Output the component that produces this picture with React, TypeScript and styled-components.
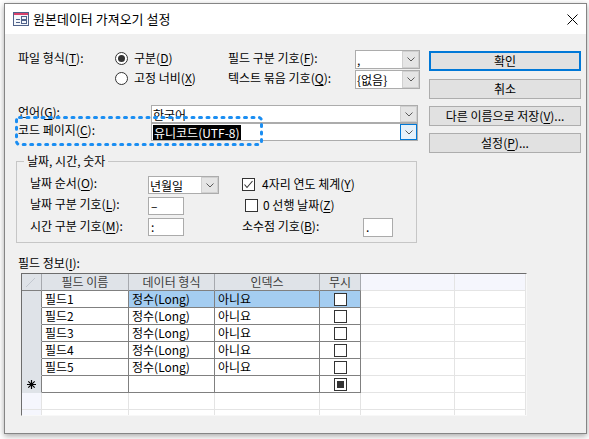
import React from "react";
import styled, { createGlobalStyle } from "styled-components";

const FONT = `"Noto Sans CJK KR", "Noto Sans", "Liberation Sans", sans-serif`;

const GlobalStyle = createGlobalStyle`
  html, body {
    margin: 0;
    padding: 0;
    background: #ffffff;
  }
  body {
    font-family: ${FONT};
    font-size: 12px;
    color: #000;
  }
`;

const Desktop = styled.div`
  width: 589px;
  height: 439px;
  padding: 3px 0 0 4px;
  box-sizing: border-box;
  overflow: hidden;
`;

const Window = styled.div`
  width: 583px;
  height: 431px;
  box-sizing: border-box;
  border: 1px solid #858585;
  background: #f0f0f0;
  box-shadow: 0 2px 6px rgba(0, 0, 0, 0.35);
  display: flex;
  flex-direction: column;
`;

const TitleBar = styled.div`
  height: 30px;
  flex: none;
  background: #fff;
  display: flex;
  align-items: center;
  padding-left: 8px;
`;

const TitleText = styled.span`
  margin-left: 4px;
  font-size: 13px;
  line-height: 18px;
`;

const CloseBox = styled.div`
  margin-left: auto;
  width: 28px;
  height: 30px;
  display: flex;
  align-items: center;
  justify-content: center;
`;

const Body = styled.div`
  flex: 1;
  padding-top: 16px;
`;

const TopSection = styled.div`
  display: flex;
  align-items: flex-start;
  margin-left: 13px;
  height: 103px;
`;

const Settings = styled.div`
  width: 402px;
`;

const FormatGrid = styled.div`
  display: grid;
  grid-template-columns: 97px 113px 127px 65px;
  grid-auto-rows: 20px;
`;

const EncodingGrid = styled.div`
  position: relative;
  margin-top: 15px;
  display: grid;
  grid-template-columns: 133px 267px;
  grid-auto-rows: 18px;
`;

const Label = styled.span<{ $shift?: number }>`
  align-self: start;
  margin-top: ${(p) => p.$shift ?? 0}px;
  line-height: 16px;
  white-space: nowrap;
`;

const Key = styled.u`
  text-underline-offset: 2px;
`;

const Option = styled.div`
  display: flex;
  align-items: center;
  height: 16px;
  align-self: start;
  white-space: nowrap;
  line-height: 16px;
`;

const RadioDot = styled.span<{ $on?: boolean }>`
  width: 13px;
  height: 13px;
  box-sizing: border-box;
  border-radius: 50%;
  border: 1px solid #333;
  background: #fff;
  margin-right: 6px;
  display: inline-flex;
  align-items: center;
  justify-content: center;

  &::after {
    content: "";
    width: 7px;
    height: 7px;
    border-radius: 50%;
    background: #333;
    display: ${(p) => (p.$on ? "block" : "none")};
  }
`;

const CheckOption = styled(Option)<{ $indent?: number }>`
  margin-left: ${(p) => p.$indent ?? 0}px;
`;

const CheckBox = styled.span<{ $gap?: number }>`
  width: 13px;
  height: 13px;
  box-sizing: border-box;
  border: 1px solid #333;
  background: #fff;
  margin-right: ${(p) => p.$gap ?? 7}px;
  display: inline-flex;
  align-items: center;
  justify-content: center;
`;

const Mark = styled.span`
  width: 7px;
  height: 7px;
  background: #333;
`;

const ComboFrame = styled.div<{ $w: number; $h: number }>`
  width: ${(p) => p.$w}px;
  height: ${(p) => p.$h}px;
  box-sizing: border-box;
  border: 1px solid #acacac;
  background: #fff;
  display: flex;
  align-self: start;
`;

const ComboValue = styled.div`
  flex: 1;
  display: flex;
  align-items: center;
  padding-left: 1px;
  line-height: 15px;
  white-space: nowrap;
  overflow: hidden;
`;

const Highlight = styled.span`
  background: #000;
  color: #fff;
  padding: 0 1px;
`;

const DropButton = styled.div<{ $focused?: boolean }>`
  width: 17px;
  box-sizing: border-box;
  background: ${(p) => (p.$focused ? "#e5f1fb" : "#e5e5e5")};
  border: 1px solid ${(p) => (p.$focused ? "#0078d7" : "#d0d0d0")};
  display: flex;
  align-items: center;
  justify-content: center;
`;

const TextBox = styled.div<{ $w: number; $h: number }>`
  width: ${(p) => p.$w}px;
  height: ${(p) => p.$h}px;
  box-sizing: border-box;
  border: 1px solid #ababab;
  background: #fff;
  padding-left: 2px;
  line-height: 15px;
  align-self: start;
`;

const Annotation = styled.svg`
  position: absolute;
  left: -4px;
  top: 10px;
  pointer-events: none;
`;

const ButtonColumn = styled.div`
  width: 152px;
  margin-left: 9px;
  padding-top: 1px;
  display: flex;
  flex-direction: column;
  gap: 7px;
`;

const PushButton = styled.button<{ $default?: boolean }>`
  height: 20px;
  box-sizing: border-box;
  padding: 0;
  margin: 0 0 ${(p) => (p.$default ? 1 : 0)}px;
  border: ${(p) => (p.$default ? "2px solid #0078d7" : "1px solid #adadad")};
  background: #e1e1e1;
  font-family: ${FONT};
  font-size: 12px;
  line-height: 16px;
  color: #000;
`;

const GroupBox = styled.fieldset`
  margin: 0 0 0 11px;
  width: 401px;
  box-sizing: border-box;
  border: 1px solid #c6c6c6;
  padding: 7px 0 6px 13px;
`;

const GroupTitle = styled.legend`
  padding: 0 3px;
  margin-left: -6px;
  line-height: 16px;
  font-size: 12px;
`;

const DateGrid = styled.div`
  display: grid;
  grid-template-columns: 118px 94px auto;
  grid-template-rows: repeat(3, 18px);
  row-gap: 3px;
`;

const DecimalField = styled.div`
  display: flex;
  align-items: flex-start;
`;

const DecimalLabel = styled(Label)`
  width: 121px;
`;

const FieldInfo = styled.div`
  margin: 12px 0 0 13px;
  line-height: 16px;
`;

const GridFrame = styled.div`
  margin: 2px 0 0 16px;
  width: 506px;
  height: 143px;
  box-sizing: border-box;
  border-top: 1px solid #6d6d6d;
  border-left: 1px solid #6d6d6d;
  border-right: 1px solid #f8f8f8;
  border-bottom: 1px solid #f8f8f8;
  background: #fff;
  overflow: hidden;
  display: grid;
  grid-template-columns: 20px 87px 86px 105px 41px 94px 71px;
  grid-auto-rows: 17px;
  align-content: start;
`;

const HeadCell = styled.div<{ $faint?: boolean }>`
  box-sizing: border-box;
  border-right: 1px solid ${(p) => (p.$faint ? "#e4e4e4" : "#a6a9ae")};
  border-bottom: 1px solid ${(p) => (p.$faint ? "#e4e4e4" : "#808080")};
  background: ${(p) => (p.$faint ? "#f5f6fd" : "#dfe3e8")};
  color: #3c3c3c;
  text-align: center;
  line-height: 16px;
  white-space: nowrap;
  overflow: hidden;
  display: flex;
  align-items: center;
  justify-content: center;
`;

const RowHeader = styled.div<{ $faint?: boolean }>`
  box-sizing: border-box;
  border-right: 1px solid ${(p) => (p.$faint ? "#e4e4e4" : "#808080")};
  border-bottom: 1px solid ${(p) => (p.$faint ? "#e4e4e4" : "#dfe3e8")};
  background: ${(p) => (p.$faint ? "#f5f6fd" : "#dfe3e8")};
  display: flex;
  align-items: center;
  justify-content: center;
`;

const DataCell = styled.div<{ $selected?: boolean; $faint?: boolean; $center?: boolean }>`
  box-sizing: border-box;
  border-right: 1px solid ${(p) => (p.$faint ? "#e4e4e4" : "#808080")};
  border-bottom: 1px solid ${(p) => (p.$faint ? "#e4e4e4" : "#808080")};
  background: ${(p) => (p.$selected ? "#a4cdf1" : "#fff")};
  padding-left: ${(p) => (p.$center ? 0 : 3)}px;
  line-height: 16px;
  white-space: nowrap;
  overflow: hidden;
  display: flex;
  align-items: center;
  justify-content: ${(p) => (p.$center ? "center" : "flex-start")};
`;

const Chevron = () => (
  <svg width="8" height="5" viewBox="0 0 8 5">
    <polyline points="0.5,0.5 4,4 7.5,0.5" fill="none" stroke="#5a5a5a" strokeWidth="1" />
  </svg>
);

const CheckMark = () => (
  <svg width="11" height="11" viewBox="0 0 11 11">
    <polyline points="1.5,5.5 4,8.5 9.5,2" fill="none" stroke="#333" strokeWidth="1.1" />
  </svg>
);

function Combo({
  width,
  height,
  value,
  focused,
  selected,
}: {
  width: number;
  height: number;
  value: string;
  focused?: boolean;
  selected?: boolean;
}) {
  return (
    <ComboFrame $w={width} $h={height}>
      <ComboValue>{selected ? <Highlight>{value}</Highlight> : value}</ComboValue>
      <DropButton $focused={focused}>
        <Chevron />
      </DropButton>
    </ComboFrame>
  );
}

const AppIcon = () => (
  <svg width="16" height="16" viewBox="0 0 16 16">
    <rect x="0.5" y="1.5" width="15" height="13" fill="#f4f7fb" stroke="#50628a" />
    <rect x="1" y="2" width="14" height="2" fill="#d8416a" />
    <path d="M3 8.5h4M3 11.5h4" stroke="#50628a" />
    <rect x="8.5" y="5.5" width="5" height="3" fill="none" stroke="#50628a" />
    <rect x="8.5" y="9.5" width="5" height="3" fill="none" stroke="#50628a" />
  </svg>
);

const NewRowStar = () => (
  <svg width="9" height="9" viewBox="0 0 9 9">
    <path
      d="M4.5 0v9M0 4.5h9M1.3 1.3l6.4 6.4M7.7 1.3l-6.4 6.4"
      stroke="#000"
      strokeWidth="1.2"
    />
  </svg>
);

const fields = ["필드1", "필드2", "필드3", "필드4", "필드5"];

export default function App() {
  return (
    <Desktop>
      <GlobalStyle />
      <Window>
        <TitleBar>
          <AppIcon />
          <TitleText>원본데이터 가져오기 설정</TitleText>
          <CloseBox>
            <svg width="11" height="11" viewBox="0 0 11 11">
              <path d="M0.5 0.5l10 10M10.5 0.5l-10 10" stroke="#000" strokeWidth="1" />
            </svg>
          </CloseBox>
        </TitleBar>
        <Body>
          <TopSection>
            <Settings>
              <FormatGrid>
                <Label>
                  파일 형식(<Key>T</Key>):
                </Label>
                <Option>
                  <RadioDot $on />
                  구분(<Key>D</Key>)
                </Option>
                <Label>
                  필드 구분 기호(<Key>F</Key>):
                </Label>
                <Combo width={65} height={19} value="," />
                <span />
                <Option>
                  <RadioDot />
                  고정 너비(<Key>X</Key>)
                </Option>
                <Label>
                  텍스트 묶음 기호(<Key>Q</Key>):
                </Label>
                <Combo width={65} height={19} value="{없음}" />
              </FormatGrid>
              <EncodingGrid>
                <Label $shift={-1}>
                  언어(<Key>G</Key>):
                </Label>
                <Combo width={267} height={18} value="한국어" />
                <Label $shift={-1}>
                  코드 페이지(<Key>C</Key>):
                </Label>
                <Combo width={267} height={18} value="유니코드(UTF-8)" focused selected />
                <Annotation width="250" height="32" viewBox="0 0 250 32">
                  <rect
                    x="2.5"
                    y="2.5"
                    width="245"
                    height="27"
                    rx="3"
                    fill="none"
                    stroke="#1b8ef2"
                    strokeWidth="3"
                    strokeDasharray="2 5.5"
                    strokeLinecap="round"
                  />
                </Annotation>
              </EncodingGrid>
            </Settings>
            <ButtonColumn>
              <PushButton $default>확인</PushButton>
              <PushButton>취소</PushButton>
              <PushButton>
                다른 이름으로 저장(<Key>V</Key>)...
              </PushButton>
              <PushButton>
                설정(<Key>P</Key>)...
              </PushButton>
            </ButtonColumn>
          </TopSection>

          <GroupBox>
            <GroupTitle>날짜, 시간, 숫자</GroupTitle>
            <DateGrid>
              <Label $shift={-1}>
                날짜 순서(<Key>O</Key>):
              </Label>
              <Combo width={71} height={18} value="년월일" />
              <CheckOption>
                <CheckBox>
                  <CheckMark />
                </CheckBox>
                4자리 연도 체계(<Key>Y</Key>)
              </CheckOption>

              <Label $shift={-1}>
                날짜 구분 기호(<Key>L</Key>):
              </Label>
              <TextBox $w={36} $h={18}>–</TextBox>
              <CheckOption $indent={3}>
                <CheckBox $gap={5} />0 선행 날짜(<Key>Z</Key>)
              </CheckOption>

              <Label>
                시간 구분 기호(<Key>M</Key>):
              </Label>
              <TextBox $w={36} $h={18}>:</TextBox>
              <DecimalField>
                <DecimalLabel>
                  소수점 기호(<Key>B</Key>):
                </DecimalLabel>
                <TextBox $w={30} $h={19}>.</TextBox>
              </DecimalField>
            </DateGrid>
          </GroupBox>

          <FieldInfo>
            필드 정보(<Key>I</Key>):
          </FieldInfo>
          <GridFrame>
            <HeadCell>
              <svg width="18" height="15" viewBox="0 0 18 15">
                <path d="M3 12L12 3" stroke="#c3c8d0" strokeWidth="1" />
              </svg>
            </HeadCell>
            <HeadCell>필드 이름</HeadCell>
            <HeadCell>데이터 형식</HeadCell>
            <HeadCell>인덱스</HeadCell>
            <HeadCell>무시</HeadCell>
            <HeadCell $faint />
            <HeadCell $faint />

            {fields.map((name, i) => (
              <React.Fragment key={name}>
                <RowHeader />
                <DataCell>{name}</DataCell>
                <DataCell $selected={i === 0}>정수(Long)</DataCell>
                <DataCell $selected={i === 0}>아니요</DataCell>
                <DataCell $selected={i === 0} $center>
                  <CheckBox $gap={0} />
                </DataCell>
                <DataCell $faint />
                <DataCell $faint />
              </React.Fragment>
            ))}

            <RowHeader>
              <NewRowStar />
            </RowHeader>
            <DataCell />
            <DataCell />
            <DataCell />
            <DataCell $center>
              <CheckBox $gap={0}>
                <Mark />
              </CheckBox>
            </DataCell>
            <DataCell $faint />
            <DataCell $faint />

            {[0, 1].map((r) => (
              <React.Fragment key={r}>
                <RowHeader $faint />
                <DataCell $faint />
                <DataCell $faint />
                <DataCell $faint />
                <DataCell $faint />
                <DataCell $faint />
                <DataCell $faint />
              </React.Fragment>
            ))}
          </GridFrame>
        </Body>
      </Window>
    </Desktop>
  );
}
